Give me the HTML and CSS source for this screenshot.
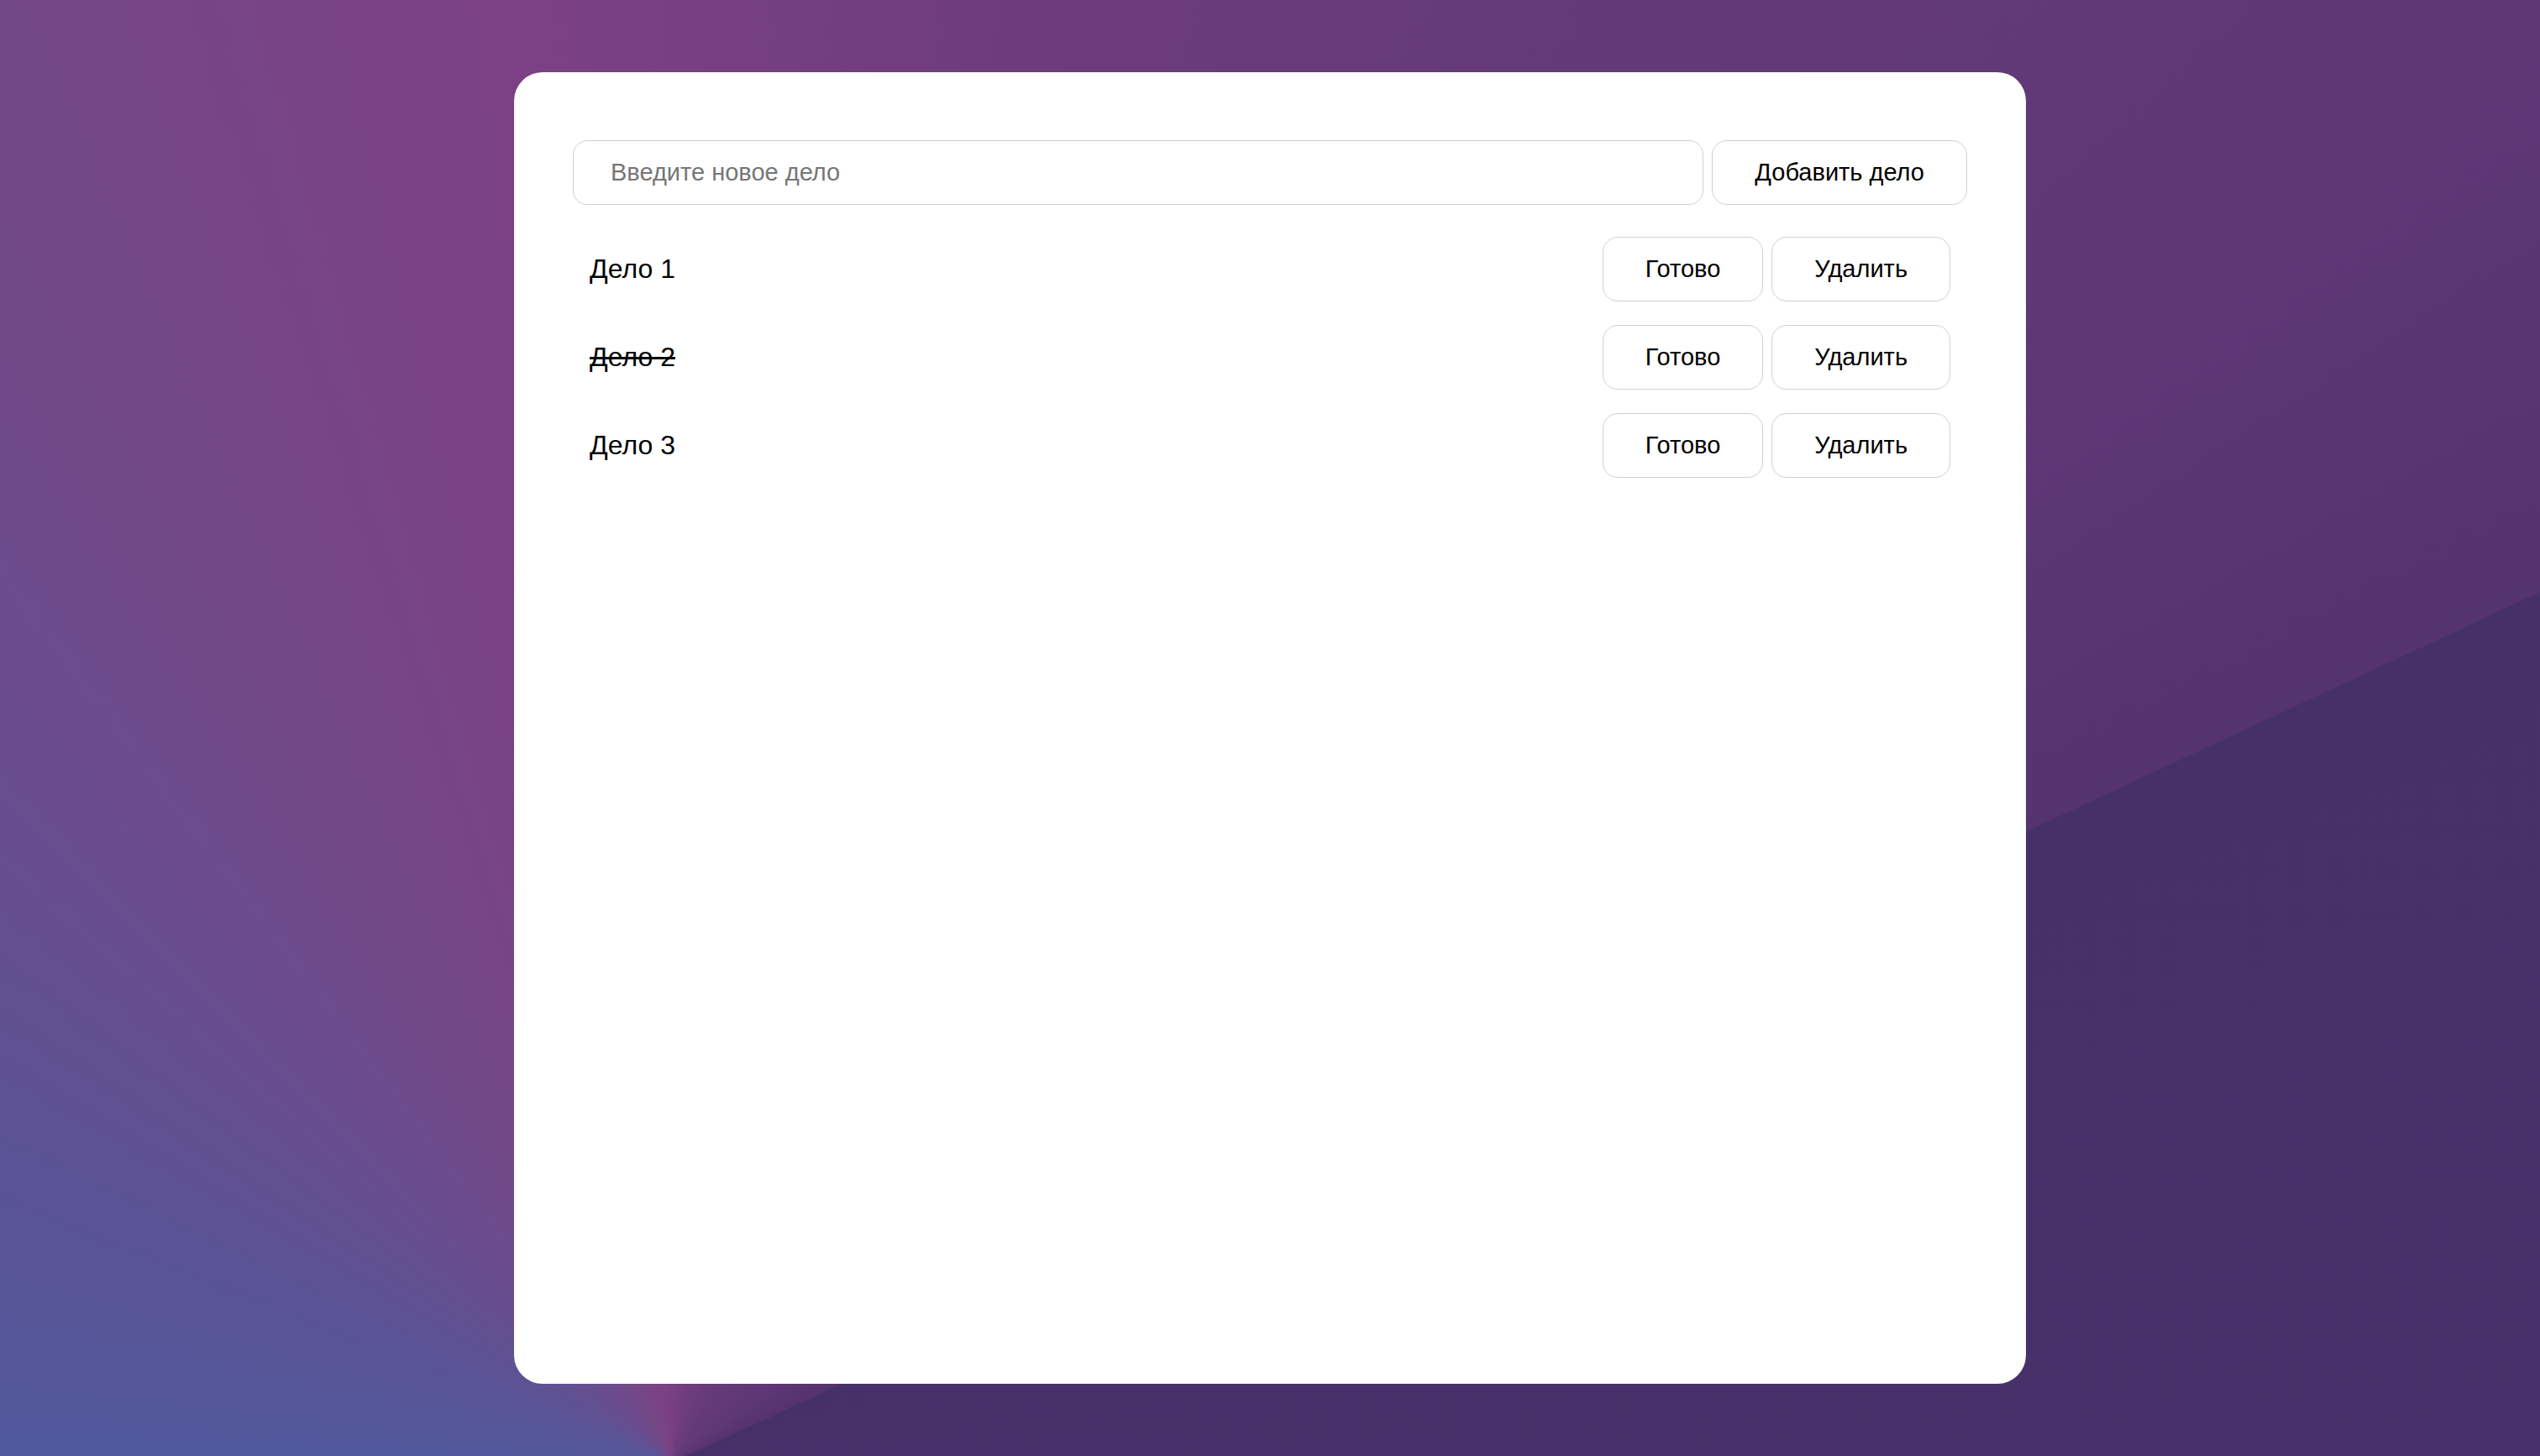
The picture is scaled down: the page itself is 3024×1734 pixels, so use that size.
FILE: index.html
```html
<!DOCTYPE html>
<html lang="ru">
<head>
<meta charset="utf-8">
<title>Список дел</title>
<link rel="stylesheet" href="styles.css">
</head>
<body>
<main class="card">
  <form class="add-form">
    <input class="add-input" type="text" placeholder="Введите новое дело">
    <button class="btn add-btn" type="button">Добавить дело</button>
  </form>
  <ul class="todo-list">
    <li class="todo-item">
      <span class="todo-text">Дело 1</span>
      <div class="todo-actions">
        <button class="btn" type="button">Готово</button>
        <button class="btn" type="button">Удалить</button>
      </div>
    </li>
    <li class="todo-item done">
      <span class="todo-text">Дело 2</span>
      <div class="todo-actions">
        <button class="btn" type="button">Готово</button>
        <button class="btn" type="button">Удалить</button>
      </div>
    </li>
    <li class="todo-item">
      <span class="todo-text">Дело 3</span>
      <div class="todo-actions">
        <button class="btn" type="button">Готово</button>
        <button class="btn" type="button">Удалить</button>
      </div>
    </li>
  </ul>
</main>
</body>
</html>
```
FILE: styles.css
```css
* { box-sizing: border-box; }

html, body {
  margin: 0;
  padding: 0;
  height: 100%;
}

body {
  font-family: "Liberation Sans", Arial, Helvetica, sans-serif;
  color: #000;
  display: flex;
  align-items: center;
  justify-content: center;
  min-height: 100vh;
  background: conic-gradient(from 0deg at 800px 1742px,
    #784084 0deg,
    #6e3c7e 13deg,
    #663a7a 30deg,
    #5e3777 52deg,
    #55336f 65deg,
    #46306a 65deg,
    #4a336e 180deg,
    #4c5a9e 262deg,
    #5d5294 299deg,
    #6a4c8e 318deg,
    #744887 335deg,
    #7c4085 354deg,
    #784084 360deg);
}

.card {
  width: 1800px;
  height: 1562px;
  background: #fff;
  border-radius: 34px;
  padding: 81px 70px;
}

.add-form {
  display: flex;
  gap: 10px;
  margin: 0 0 24px;
}

.add-input {
  flex: 1;
  height: 77px;
  border: 1px solid #d0d0d0;
  border-radius: 17px;
  padding: 0 44px;
  font-family: inherit;
  font-size: 29px;
  color: #000;
  background: #fff;
  outline: none;
}

.add-input::placeholder {
  color: #767676;
}

.btn {
  font-family: inherit;
  font-size: 29px;
  line-height: 33px;
  color: #000;
  background: #fff;
  border: 1px solid #d0d0d0;
  border-radius: 18px;
  padding: 21px 50px;
  cursor: pointer;
}

.add-btn {
  height: 77px;
}

.todo-list {
  list-style: none;
  margin: 0;
  padding: 0;
}

.todo-item {
  display: flex;
  align-items: center;
  justify-content: space-between;
  padding: 14px 20px;
}

.todo-text {
  font-size: 32px;
}

.done .todo-text {
  text-decoration: line-through;
}

.todo-actions {
  display: flex;
  gap: 10px;
}
```
